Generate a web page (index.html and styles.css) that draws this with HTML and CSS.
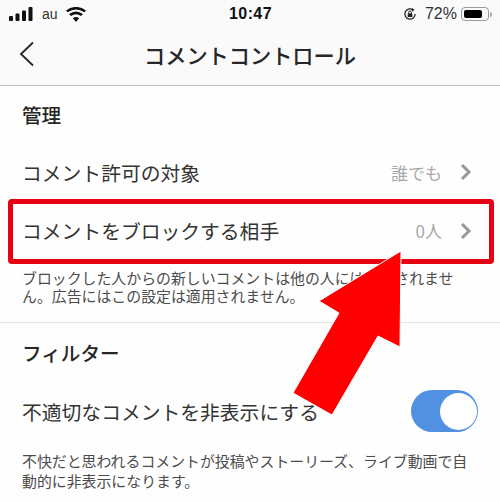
FILE: index.html
```html
<!DOCTYPE html>
<html lang="ja">
<head>
    <meta charset="UTF-8">
    <title>コメントコントロール</title>
    <link rel="stylesheet" href="styles.css">
</head>
<body>
    <div class="top-bar">
        <div class="status-bar">
            <div class="status-left">
                <svg class="signal" width="24" height="14" viewBox="0 0 24 14">
                    <rect x="0" y="9" width="4" height="5" rx="1"/>
                    <rect x="6.5" y="6.5" width="4" height="7.5" rx="1"/>
                    <rect x="13" y="3.5" width="4" height="10.5" rx="1"/>
                    <rect x="19.5" y="0" width="4" height="14" rx="1"/>
                </svg>
                <span class="carrier">au</span>
                <svg class="wifi" width="20" height="15" viewBox="0 0 20 15">
                    <path d="M10 15 L6.9 11.2 Q10 8.7 13.1 11.2 Z"/>
                    <path d="M4.9 9.1 L3.1 7 Q10 1.8 16.9 7 L15.1 9.1 Q10 5.3 4.9 9.1 Z"/>
                    <path d="M1.6 5.3 L0 3.4 Q10 -3.6 20 3.4 L18.4 5.3 Q10 -0.4 1.6 5.3 Z"/>
                </svg>
            </div>
            <div class="clock">10:47</div>
            <div class="status-right">
                <svg class="lock" width="14" height="14" viewBox="0 0 15 15">
                    <path d="M13 7.5 A5.5 5.5 0 1 1 10.5 2.9" fill="none" stroke="#222" stroke-width="1.4"/>
                    <path d="M9.5 1 L12.5 3 L9.5 5 Z" fill="#222"/>
                    <rect x="5" y="6.8" width="5" height="4" rx="0.6" fill="#222"/>
                    <path d="M6 7 V5.8 A1.5 1.5 0 0 1 9 5.8 V7" fill="none" stroke="#222" stroke-width="1"/>
                </svg>
                <span class="percent">72%</span>
                <div class="battery"><div class="battery-level"></div></div>
                <div class="battery-tip"></div>
            </div>
        </div>
        <div class="nav-bar">
            <svg class="back" width="16" height="26" viewBox="0 0 16 26">
                <path d="M14 1.5 L2 13 L14 24.5" fill="none" stroke="#262626" stroke-width="1.8"/>
            </svg>
            <div class="nav-title">コメントコントロール</div>
        </div>
    </div>

    <div class="section-title first">管理</div>
    <div class="row row-plain">
        <span class="row-label">コメント許可の対象</span>
        <span class="row-value">誰でも</span>
        <svg class="chevron" width="12" height="18" viewBox="0 0 12 18"><path d="M2 2 L9 9 L2 16" fill="none" stroke="#999" stroke-width="3"/></svg>
    </div>
    <div class="row row-marked">
        <span class="row-label">コメントをブロックする相手</span>
        <span class="row-value">0人</span>
        <svg class="chevron" width="12" height="18" viewBox="0 0 12 18"><path d="M2 2 L9 9 L2 16" fill="none" stroke="#999" stroke-width="3"/></svg>
    </div>
    <p class="help help-block">ブロックした人からの新しいコメントは他の人には表示されません。広告にはこの設定は適用されません。</p>

    <div class="divider"></div>

    <div class="section-title">フィルター</div>
    <div class="row row-toggle">
        <span class="row-label">不適切なコメントを非表示にする</span>
        <div class="toggle"><div class="knob"></div></div>
    </div>
    <p class="help help-filter">不快だと思われるコメントが投稿やストーリーズ、ライブ動画で自動的に非表示になります。</p>

    <svg class="arrow" width="500" height="502" viewBox="0 0 500 502">
        <polygon points="401,251 319,301 339,313 293,393 332,415 378,336 400,347" fill="#fe0000" stroke="#fff" stroke-width="1"/>
    </svg>
</body>
</html>
```

FILE: styles.css
```css
* {
    box-sizing: border-box;
}
html, body {
    height: 100%;
}
body {
    margin: 0;
    position: relative;
    overflow: hidden;
    background-color: #fefefe;
    color: #333;
    font-family: "Noto Sans CJK JP", "Noto Sans", sans-serif;
}
.top-bar {
    height: 86px;
    background-color: #fafafa;
    border-bottom: 1px solid #c4c4c4;
}
.status-bar {
    height: 28px;
    padding: 0 8px 0 9px;
    display: grid;
    grid-template-columns: 1fr auto 1fr;
    align-items: center;
}
.status-left, .status-right {
    display: flex;
    align-items: center;
}
.status-right {
    justify-content: flex-end;
}
.signal, .wifi {
    fill: #111;
}
.carrier {
    margin-left: 9px;
    margin-right: 8px;
    font-family: "Liberation Sans", sans-serif;
    font-size: 14px;
    color: #333;
}
.clock {
    font-family: "Liberation Sans", sans-serif;
    font-size: 16px;
    font-weight: bold;
    color: #111;
    letter-spacing: 0.4px;
}
.percent {
    margin-left: 8px;
    margin-right: 4px;
    font-family: "Liberation Sans", sans-serif;
    font-size: 16px;
    color: #333;
}
.battery {
    width: 28px;
    height: 14px;
    padding: 2px;
    border: 1px solid #999;
    border-radius: 4px;
}
.battery-level {
    width: 18px;
    height: 100%;
    background-color: #000;
    border-radius: 2px;
}
.battery-tip {
    width: 2px;
    height: 5px;
    margin-left: 1px;
    background-color: #aaa;
    border-radius: 0 2px 2px 0;
}
.nav-bar {
    height: 57px;
    padding-left: 19px;
    padding-right: 35px;
    display: flex;
    align-items: center;
}
.back {
    margin-bottom: 5px;
}
.nav-title {
    flex: 1;
    padding-bottom: 4px;
    text-align: center;
    font-size: 21.2px;
    font-weight: 500;
    color: #262626;
    white-space: nowrap;
}
.section-title {
    margin-top: 16px;
    padding-left: 22px;
    font-size: 19.6px;
    font-weight: 500;
    line-height: 28px;
    color: #262626;
}
.section-title.first {
    margin-top: 15px;
}
.row {
    display: flex;
    align-items: center;
    font-size: 19.8px;
    white-space: nowrap;
}
.row-label {
    flex: 1;
}
.row-value {
    margin-right: 18px;
    font-size: 17px;
    color: #a8a8a8;
}
.chevron {
    margin-right: 28px;
}
.row-plain {
    margin-top: 16px;
    height: 54px;
    padding-left: 22px;
}
.row-marked {
    margin: 0 6px 0 8px;
    height: 65px;
    padding-left: 9px;
    padding-bottom: 2px;
    border: 5px solid #e60012;
    border-radius: 4px;
}
.row-marked .chevron {
    margin-right: 17px;
}
.help {
    margin: 0;
    padding: 0 22px;
    font-size: 14.9px;
    color: #4c4c4c;
}
.help-block {
    margin-top: 5px;
    line-height: 17.5px;
}
.divider {
    margin-top: 18px;
    height: 1px;
    background-color: #e4e4e4;
}
.row-toggle {
    margin-top: 23px;
    height: 42px;
    padding-left: 22px;
    padding-right: 22px;
}
.toggle {
    width: 67px;
    height: 42px;
    padding-right: 1px;
    background-color: #5290e2;
    border-radius: 21px;
    display: flex;
    align-items: center;
    justify-content: flex-end;
}
.knob {
    width: 37px;
    height: 37px;
    background-color: #fff;
    border-radius: 50%;
}
.help-filter {
    margin-top: 19px;
    line-height: 19.5px;
}
.arrow {
    position: absolute;
    left: 0;
    top: 0;
}
```
